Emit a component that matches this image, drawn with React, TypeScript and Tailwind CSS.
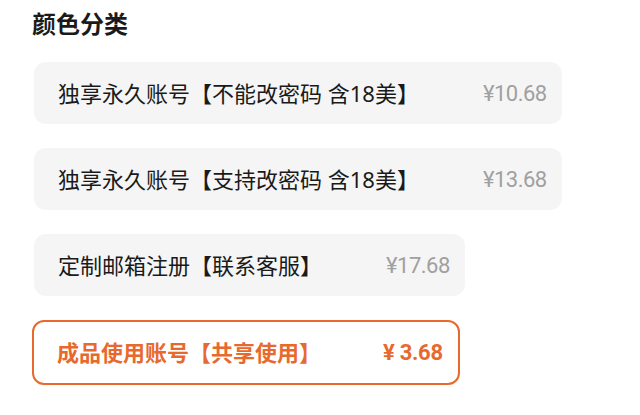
const options = [
  { label: "独享永久账号【不能改密码 含18美】", price: "¥10.68", active: false },
  { label: "独享永久账号【支持改密码 含18美】", price: "¥13.68", active: false },
  { label: "定制邮箱注册【联系客服】", price: "¥17.68", active: false },
  { label: "成品使用账号【共享使用】", price: "¥ 3.68", active: true },
];

const priceFont = { fontFamily: 'Roboto, "Noto Sans", sans-serif' };

export default function App() {
  return (
    <div
      className="min-h-[415px] bg-white pl-8 pt-[8px]"
      style={{ fontFamily: '"Noto Sans", "Noto Sans CJK SC", sans-serif' }}
    >
      <h2 className="text-[24px] font-bold leading-[32px] text-[#1a1a1a]">颜色分类</h2>
      <div className="mt-[22px] flex flex-col items-start gap-[24px]">
        {options.map((item) =>
          item.active ? (
            <div
              key={item.label}
              className="flex h-[65px] items-center gap-[62px] rounded-[12px] border-2 border-[#e8692e] pl-[23px] pr-[15px] text-[22px] font-bold text-[#e8692e]"
            >
              <span>{item.label}</span>
              <span style={priceFont} className="tracking-[-0.3px]">{item.price}</span>
            </div>
          ) : (
            <div
              key={item.label}
              className="ml-[2px] flex h-[62px] items-center gap-[64px] rounded-[12px] bg-[#f5f5f5] pl-[24px] pr-[15px] text-[22px]"
            >
              <span className="text-[#1a1a1a]">{item.label}</span>
              <span style={priceFont} className="tracking-[-0.5px] text-[#a0a0a0]">
                {item.price}
              </span>
            </div>
          ),
        )}
      </div>
    </div>
  );
}
